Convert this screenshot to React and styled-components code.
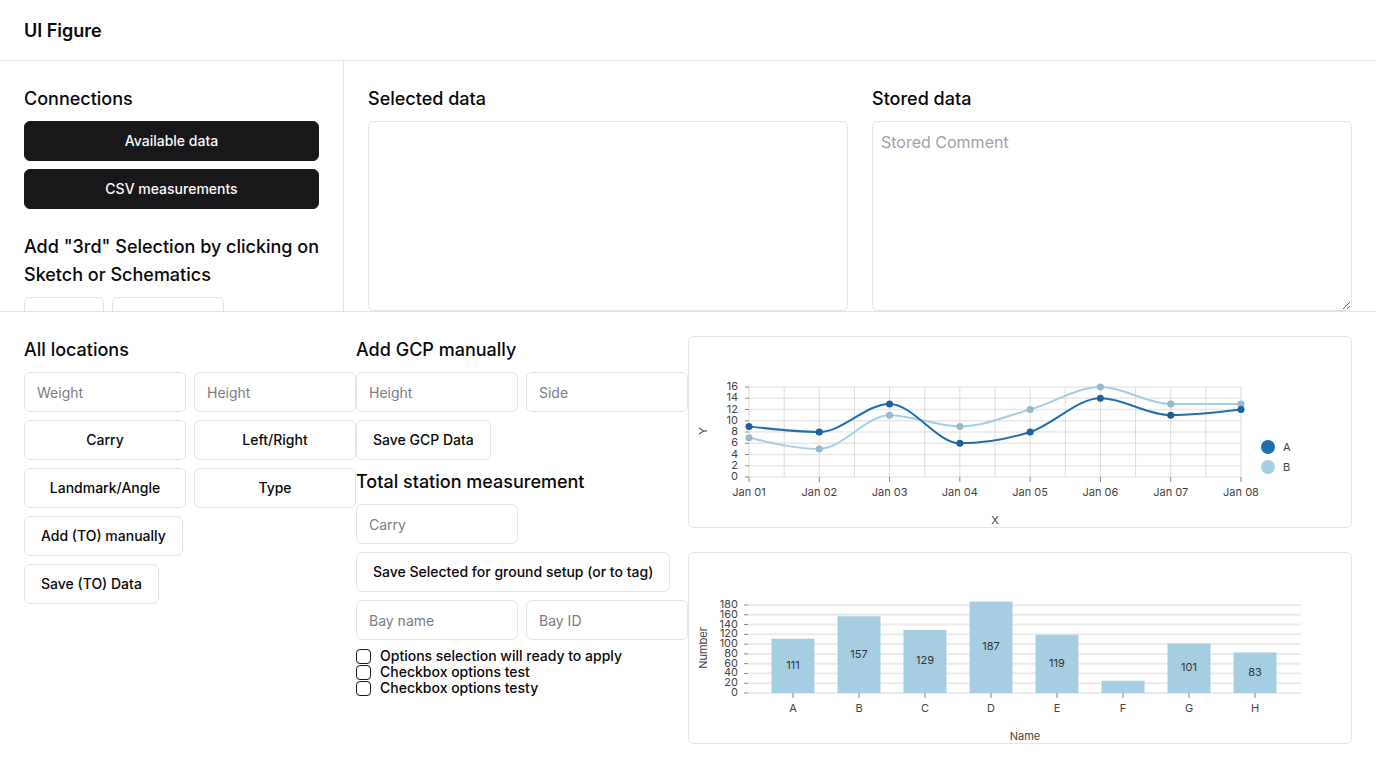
import React from "react";
import styled, { createGlobalStyle } from "styled-components";

const GlobalStyle = createGlobalStyle`
  * {
    box-sizing: border-box;
  }

  body {
    margin: 0;
    background: #ffffff;
    color: #09090b;
    font-family: Inter, "Noto Sans", sans-serif;
  }
`;

const Page = styled.div`
  min-height: 100vh;
`;

const Header = styled.header`
  height: 61px;
  padding: 0 24px;
  display: flex;
  align-items: center;
  border-bottom: 1px solid #e4e4e7;
  font-size: 18px;
  font-weight: 600;
`;

const TopSection = styled.section`
  height: 251px;
  display: grid;
  grid-template-columns: 344px 1fr;
  border-bottom: 1px solid #e4e4e7;
  overflow: hidden;
`;

const SidePane = styled.div`
  padding: 24px;
  border-right: 1px solid #e4e4e7;
  display: flex;
  flex-direction: column;
  gap: 8px;
  overflow: hidden;
`;

const DataPane = styled.div`
  padding: 24px;
  display: grid;
  grid-template-columns: 1fr 1fr;
  gap: 24px;
  overflow: hidden;
`;

const Field = styled.div`
  display: flex;
  flex-direction: column;
  gap: 8px;
`;

const Heading = styled.h2`
  margin: 0;
  margin-top: ${(props) => (props.$spaced ? "16px" : "0")};
  font-size: 18px;
  line-height: 28px;
  font-weight: 500;
`;

const Button = styled.button`
  height: 40px;
  padding: 0 16px 1px;
  width: ${(props) => (props.$block ? "100%" : "auto")};
  align-self: ${(props) => (props.$block ? "stretch" : "flex-start")};
  border-radius: 6px;
  border: 1px solid ${(props) => (props.$dark ? "#18181b" : "#e4e4e7")};
  background: ${(props) => (props.$dark ? "#18181b" : "#ffffff")};
  color: ${(props) => (props.$dark ? "#fafafa" : "#09090b")};
  font-family: Inter, "Noto Sans", sans-serif;
  font-size: 14px;
  font-weight: 500;
  white-space: nowrap;
  cursor: pointer;
  flex-shrink: 0;
`;

const ButtonRow = styled.div`
  display: flex;
  gap: 8px;
`;

const TextArea = styled.textarea`
  width: 100%;
  height: 190px;
  padding: 8px;
  border: 1px solid #e4e4e7;
  border-radius: 6px;
  font-family: Inter, "Noto Sans", sans-serif;
  font-size: 16px;
  line-height: 24px;
  color: #09090b;
  flex-shrink: 0;
  resize: ${(props) => (props.$fixed ? "none" : "both")};

  &::placeholder {
    color: #a1a1aa;
  }
`;

const BottomSection = styled.section`
  padding: 24px;
  display: grid;
  grid-template-columns: 1fr 1fr 2fr;
`;

const Column = styled.div`
  display: flex;
  flex-direction: column;
  gap: 8px;
  align-items: stretch;
`;

const PairGrid = styled.div`
  display: grid;
  grid-template-columns: 162px 162px;
  gap: 8px;
`;

const Input = styled.input`
  height: 40px;
  width: 100%;
  padding: 0 12px;
  border: 1px solid #e4e4e7;
  border-radius: 6px;
  font-family: Inter, "Noto Sans", sans-serif;
  font-size: 14px;
  color: #09090b;

  &::placeholder {
    color: #7c7c84;
  }
`;

const CheckList = styled.div`
  display: flex;
  flex-direction: column;
`;

const CheckRow = styled.label`
  height: 16px;
  display: flex;
  align-items: center;
  gap: 9px;
  font-size: 14px;
  line-height: 16px;
  font-weight: 500;
`;

const CheckBox = styled.input`
  appearance: none;
  margin: 0;
  width: 15px;
  height: 15px;
  border: 1.5px solid #18181b;
  border-radius: 4px;
  background: #ffffff;
`;

const ChartStack = styled.div`
  display: flex;
  flex-direction: column;
  gap: 24px;
`;

const ChartCard = styled.div`
  height: 192px;
  border: 1px solid #e4e4e7;
  border-radius: 6px;
  overflow: hidden;

  svg {
    display: block;
    width: 100%;
    height: 100%;
    font-family: Inter, "Noto Sans", sans-serif;
  }
`;

// d3-style monotone X curve
const sign = (v) => (v < 0 ? -1 : 1);

const monotonePath = (pts) => {
  const n = pts.length;
  const t = new Array(n).fill(0);
  for (let i = 1; i < n - 1; i++) {
    const [x0, y0] = pts[i - 1];
    const [x1, y1] = pts[i];
    const [x2, y2] = pts[i + 1];
    const h0 = x1 - x0;
    const h1 = x2 - x1;
    const s0 = (y1 - y0) / h0;
    const s1 = (y2 - y1) / h1;
    const p = (s0 * h1 + s1 * h0) / (h0 + h1);
    t[i] =
      (sign(s0) + sign(s1)) *
        Math.min(Math.abs(s0), Math.abs(s1), 0.5 * Math.abs(p)) || 0;
  }
  const end = (a, b, tt) => ((3 * (b[1] - a[1])) / (b[0] - a[0]) - tt) / 2;
  t[0] = end(pts[0], pts[1], t[1]);
  t[n - 1] = end(pts[n - 2], pts[n - 1], t[n - 2]);

  let d = `M${pts[0][0]},${pts[0][1]}`;
  for (let i = 0; i < n - 1; i++) {
    const [x0, y0] = pts[i];
    const [x1, y1] = pts[i + 1];
    const dx = (x1 - x0) / 3;
    d += ` C${x0 + dx},${y0 + dx * t[i]} ${x1 - dx},${y1 - dx * t[i + 1]} ${x1},${y1}`;
  }
  return d;
};

const dates = ["Jan 01", "Jan 02", "Jan 03", "Jan 04", "Jan 05", "Jan 06", "Jan 07", "Jan 08"];
const seriesA = [9, 8, 13, 6, 8, 14, 11, 12];
const seriesB = [7, 5, 11, 9, 12, 16, 13, 13];

const LineChart = () => {
  const x0 = 60;
  const x1 = 552;
  const step = (x1 - x0) / 7;
  const lx = (i) => x0 + i * step;
  const ly = (v) => 140 - v * 5.625;
  const yTicks = [0, 2, 4, 6, 8, 10, 12, 14, 16];
  const ptsA = seriesA.map((v, i) => [lx(i), ly(v)]);
  const ptsB = seriesB.map((v, i) => [lx(i), ly(v)]);

  return (
    <svg viewBox="0 0 662 190">
      {yTicks.map((v) => (
        <line key={"h" + v} x1={x0} x2={x1} y1={ly(v)} y2={ly(v)} stroke="#e8e8e8" strokeWidth="1.5" />
      ))}
      {Array.from({ length: 15 }, (_, i) => (
        <line key={"v" + i} x1={x0 + (i * step) / 2} x2={x0 + (i * step) / 2} y1={ly(16)} y2={ly(0)} stroke="#dcdcdc" strokeWidth="1" />
      ))}
      {yTicks.map((v) => (
        <g key={"yt" + v}>
          <line x1={56} x2={x0} y1={ly(v)} y2={ly(v)} stroke="#888" />
          <text x={49} y={ly(v)} fontSize="11" fill="#444" textAnchor="end" dominantBaseline="middle">
            {v}
          </text>
        </g>
      ))}
      {dates.map((d, i) => (
        <g key={d}>
          <line x1={lx(i)} x2={lx(i)} y1={140} y2={145} stroke="#888" />
          <text x={lx(i)} y={156} fontSize="11" fill="#444" textAnchor="middle" dominantBaseline="middle">
            {d}
          </text>
        </g>
      ))}
      <text x={15} y={94} fontSize="11" fill="#444" textAnchor="middle" dominantBaseline="middle" transform="rotate(-90 15 94)">
        Y
      </text>
      <text x={306} y={184} fontSize="11" fill="#444" textAnchor="middle" dominantBaseline="middle">
        X
      </text>
      <path d={monotonePath(ptsB)} fill="none" stroke="#a6cee3" strokeWidth="2" />
      <path d={monotonePath(ptsA)} fill="none" stroke="#1f6fb0" strokeWidth="2" />
      {ptsB.map(([x, y], i) => (
        <circle key={"b" + i} cx={x} cy={y} r="3.5" fill="#96b8cc" />
      ))}
      {ptsA.map(([x, y], i) => (
        <circle key={"a" + i} cx={x} cy={y} r="3.5" fill="#1c619c" />
      ))}
      <circle cx={579} cy={110} r="7" fill="#1f6fb0" />
      <text x={594} y={111} fontSize="11" fill="#444" dominantBaseline="middle">
        A
      </text>
      <circle cx={579} cy={130} r="7" fill="#a6cee3" />
      <text x={594} y={131} fontSize="11" fill="#444" dominantBaseline="middle">
        B
      </text>
    </svg>
  );
};

const bars = [
  { name: "A", value: 111 },
  { name: "B", value: 157 },
  { name: "C", value: 129 },
  { name: "D", value: 187 },
  { name: "E", value: 119 },
  { name: "F", value: 25 },
  { name: "G", value: 101 },
  { name: "H", value: 83 },
];

const BarChart = () => {
  const by = (v) => 140 - (v * 88) / 180;
  const yTicks = [0, 20, 40, 60, 80, 100, 120, 140, 160, 180];
  const cx = (i) => 104 + i * 66;

  return (
    <svg viewBox="0 0 662 190">
      {yTicks.map((v) => (
        <g key={v}>
          <line x1={59} x2={612} y1={by(v)} y2={by(v)} stroke="#ebebeb" strokeWidth="2" />
          <line x1={55} x2={59} y1={by(v)} y2={by(v)} stroke="#888" />
          <text x={49} y={by(v)} fontSize="11" fill="#444" textAnchor="end" dominantBaseline="middle">
            {v}
          </text>
        </g>
      ))}
      {bars.map((b, i) => (
        <g key={b.name}>
          <rect x={cx(i) - 21.5} y={by(b.value)} width="43" height={140 - by(b.value)} fill="#a6cee3" />
          {b.value > 40 && (
            <text x={cx(i)} y={(by(b.value) + 140) / 2} fontSize="11" fill="#333" textAnchor="middle" dominantBaseline="middle">
              {b.value}
            </text>
          )}
          <line x1={cx(i)} x2={cx(i)} y1={140} y2={145} stroke="#888" />
          <text x={cx(i)} y={156} fontSize="11" fill="#444" textAnchor="middle" dominantBaseline="middle">
            {b.name}
          </text>
        </g>
      ))}
      <text x={15} y={95} fontSize="11" fill="#444" textAnchor="middle" dominantBaseline="middle" transform="rotate(-90 15 95)">
        Number
      </text>
      <text x={336} y={184} fontSize="11" fill="#444" textAnchor="middle" dominantBaseline="middle">
        Name
      </text>
    </svg>
  );
};

const App = () => {
  return (
    <Page>
      <GlobalStyle />
      <Header>UI Figure</Header>

      <TopSection>
        <SidePane>
          <Heading>Connections</Heading>
          <Button $dark $block>
            Available data
          </Button>
          <Button $dark $block>
            CSV measurements
          </Button>
          <Heading $spaced>Add "3rd" Selection by clicking on Sketch or Schematics</Heading>
          <ButtonRow>
            <Button>Sketch</Button>
            <Button>Schematics</Button>
          </ButtonRow>
        </SidePane>

        <DataPane>
          <Field>
            <Heading>Selected data</Heading>
            <TextArea $fixed />
          </Field>
          <Field>
            <Heading>Stored data</Heading>
            <TextArea placeholder="Stored Comment" />
          </Field>
        </DataPane>
      </TopSection>

      <BottomSection>
        <Column>
          <Heading>All locations</Heading>
          <PairGrid>
            <Input placeholder="Weight" />
            <Input placeholder="Height" />
            <Button $block>Carry</Button>
            <Button $block>Left/Right</Button>
            <Button $block>Landmark/Angle</Button>
            <Button $block>Type</Button>
          </PairGrid>
          <Button>Add (TO) manually</Button>
          <Button>Save (TO) Data</Button>
        </Column>

        <Column>
          <Heading>Add GCP manually</Heading>
          <PairGrid>
            <Input placeholder="Height" />
            <Input placeholder="Side" />
          </PairGrid>
          <Button>Save GCP Data</Button>
          <Heading>Total station measurement</Heading>
          <PairGrid>
            <Input placeholder="Carry" />
          </PairGrid>
          <Button>Save Selected for ground setup (or to tag)</Button>
          <PairGrid>
            <Input placeholder="Bay name" />
            <Input placeholder="Bay ID" />
          </PairGrid>
          <CheckList>
            <CheckRow>
              <CheckBox type="checkbox" />
              Options selection will ready to apply
            </CheckRow>
            <CheckRow>
              <CheckBox type="checkbox" />
              Checkbox options test
            </CheckRow>
            <CheckRow>
              <CheckBox type="checkbox" />
              Checkbox options testy
            </CheckRow>
          </CheckList>
        </Column>

        <ChartStack>
          <ChartCard>
            <LineChart />
          </ChartCard>
          <ChartCard>
            <BarChart />
          </ChartCard>
        </ChartStack>
      </BottomSection>
    </Page>
  );
};

export default App;
